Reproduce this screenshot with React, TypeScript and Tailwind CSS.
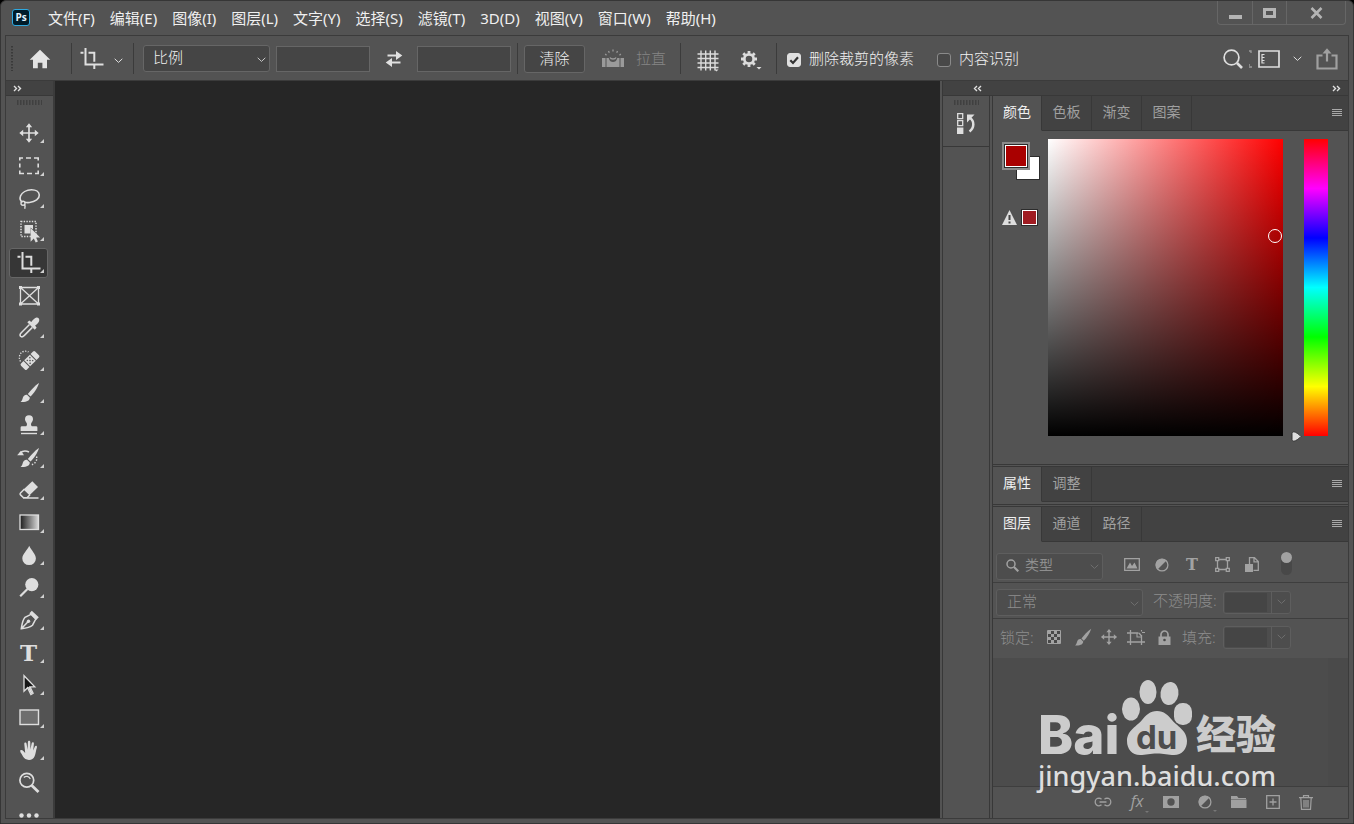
import React, { useState } from 'react';

type Kids = { children: React.ReactNode };

function Glyph({ children, w = 24, h = 24, className = '' }: Kids & { w?: number; h?: number; className?: string }) {
  return (
    <svg width={w} height={h} viewBox={`0 0 ${w} ${h}`} fill="none" stroke="none" className={`block shrink-0 ${className}`} aria-hidden="true">
      {children}
    </svg>
  );
}

function Chevron({ className = '' }: { className?: string }) {
  return (
    <Glyph w={9} h={6} className={className}>
      <path d="M0.7 0.8 4.5 4.4 8.3 0.8" stroke="currentColor" strokeWidth="1" />
    </Glyph>
  );
}

function DoubleChevron({ left = false }: { left?: boolean }) {
  return (
    <Glyph w={9} h={7} className={left ? 'rotate-180' : ''}>
      <path d="M1 1 3.500 3.500 1 6M5 1 7.500 3.500 5 6" stroke="#e0e0e0" strokeWidth="1.400" />
    </Glyph>
  );
}

function MoveShape() {
  return (
    <>
      <path d="M12 4v16M4 12h16" stroke="currentColor" strokeWidth="1.700" />
      <path d="M12 2.300 15.200 6.200H8.800zM12 21.700 15.200 17.800H8.800zM2.300 12 6.200 8.800v6.400zM21.700 12 17.800 8.800v6.400z" fill="currentColor" />
    </>
  );
}

function CropShape() {
  return (
    <path
      d="M0.500 5.700H3.500M5.500 1V17.400H23.500M8.500 5.700H14.300V14.800M14.300 18.500V22"
      stroke="currentColor"
      strokeWidth="2"
    />
  );
}

function BrushShape() {
  return (
    <>
      <path d="M22 2 C18 4.500 13.500 9.500 10.800 13 L13.500 15.600 C16.800 12.500 20.500 7 22 2z" fill="currentColor" />
      <path d="M10 13.800 L12.800 16.500 C13 19.500 9.500 21.500 3.500 21 C5.300 19.700 5.200 18.300 6 16.200 C6.800 14.300 8.400 13.400 10 13.800z" fill="currentColor" />
    </>
  );
}

function HalfCircle() {
  return (
    <>
      <circle cx="7" cy="7" r="5.900" stroke="currentColor" strokeWidth="1.300" />
      <path d="M2.500 11.500 A6.300 6.300 0 0 1 11.500 2.500z" fill="currentColor" />
    </>
  );
}

type Tool = { name: string; icon: React.ReactNode; flyout?: boolean };

const tools: Tool[] = [
  { name: '移动工具', icon: <Glyph><MoveShape /></Glyph> },
  {
    name: '矩形选框工具',
    icon: (
      <Glyph>
        <path d="M2.800 6.500V4H6M9 4h5M17 4h4.200V6.500M21.200 9.500v4M21.200 16.500v3H18M15 19.500h-5M7 19.500H2.800v-3M2.800 13.500v-4" stroke="currentColor" strokeWidth="1.600" />
      </Glyph>
    ),
  },
  {
    name: '套索工具',
    icon: (
      <Glyph>
        <path d="M5.500 16.200C3.200 14.800 2.600 12.300 3.600 9.800 5 6.500 9.500 3.900 14.500 3.800c4.500 0 7.600 2.200 7.800 5.200.2 3.700-4 6.900-9.800 7.500-1.700.2-3.300.1-5-.2" stroke="currentColor" strokeWidth="1.600" />
        <circle cx="6" cy="17.300" r="2" stroke="currentColor" strokeWidth="1.400" />
        <path d="M7.500 18.500c.8 1.300.9 2.700.2 4.300" stroke="currentColor" strokeWidth="1.500" />
      </Glyph>
    ),
  },
  {
    name: '对象选择工具',
    icon: (
      <Glyph>
        <rect x="4" y="2.500" width="15" height="15" stroke="currentColor" strokeWidth="1.500" strokeDasharray="1.400 1.300" />
        <path d="M7.500 6h8.500v4.500l-2.500-2v6H7.500z" fill="currentColor" />
        <path d="M13.600 9v13.800l3.200-3.400 1.900 4 2.200-1-1.800-3.900h4z" fill="currentColor" />
      </Glyph>
    ),
  },
  { name: '裁剪工具', icon: <Glyph><CropShape /></Glyph> },
  {
    name: '图框工具',
    flyout: false,
    icon: (
      <Glyph>
        <path d="M3.500 3.500h18v16.500h-18zM3.500 3.500l18 16.500M21.500 3.500l-18 16.500" stroke="currentColor" strokeWidth="1.300" />
        <path d="M2 2h3v3H2zM20 2h3v3h-3zM2 18.500h3v3H2zM20 18.500h3v3h-3z" fill="currentColor" />
      </Glyph>
    ),
  },
  {
    name: '吸管工具',
    icon: (
      <Glyph>
        <path d="M12.500 8.500 4.500 16.500C3.200 17.800 2.800 19.500 3.500 20.300c.8.800 2.600.4 3.900-.9l8-8" stroke="currentColor" strokeWidth="1.500" />
        <path d="m10.300 6.300 2-1.800 2 1.500c1.800-2.400 3.600-4.200 5.300-4.400 1.900-.1 3 1.400 2.600 3.100-.3 1.700-2 3.300-4.100 4.900l1.500 2.100-1.900 2z" fill="currentColor" />
      </Glyph>
    ),
  },
  {
    name: '污点修复画笔工具',
    icon: (
      <Glyph>
        <g transform="rotate(-45 13 11.500)">
          <path d="M4.500 7.300h3.500v8.400h-3.500a1.500 1.500 0 0 1-1.500-1.500V8.800a1.500 1.500 0 0 1 1.500-1.500zM18 7.300h3.500A1.500 1.500 0 0 1 23 8.800v5.400a1.500 1.500 0 0 1-1.500 1.500h-3.500z" fill="currentColor" />
          <path d="M9 7.300h8v8.400h-8z" fill="currentColor" />
          <path d="M10.500 9.500h1.300M14.200 9.500h1.300M12.300 11.500h1.400M10.500 13.500h1.300M14.200 13.500h1.300" stroke="#535353" strokeWidth="1.400" />
        </g>
        <path d="M3.500 12.500C1.200 9 2.500 3.500 6.500 2.500c2-.6 4-.2 5 .6" stroke="currentColor" strokeWidth="1.300" strokeDasharray="1.300 1.400" />
      </Glyph>
    ),
  },
  { name: '画笔工具', icon: <Glyph><BrushShape /></Glyph> },
  {
    name: '仿制图章工具',
    icon: (
      <Glyph>
        <path d="M12 2.200a4 4 0 0 1 4 4c0 1.700-1 2.400-1.700 3.900-.5 1.200-.4 2.300.5 3.100H19a1.400 1.400 0 0 1 1.400 1.400v3.300H3.600v-3.300A1.400 1.400 0 0 1 5 13.200h4.200c.9-.8 1-1.900.5-3.100C9 8.600 8 7.900 8 6.200a4 4 0 0 1 4-4z" fill="currentColor" />
        <path d="M4 20.500h16" stroke="currentColor" strokeWidth="1.400" />
      </Glyph>
    ),
  },
  {
    name: '历史记录画笔工具',
    icon: (
      <Glyph>
        <BrushShape />
        <path d="M3 6.800C6 4.500 9 4.500 12 6" stroke="currentColor" strokeWidth="1.600" />
        <path d="M.2 9.300 4 4.800l3 4.500z" fill="currentColor" />
        <path d="M19.500 10.500c1.200 4-1.500 7.500-5.500 8.500" stroke="currentColor" strokeWidth="1.400" strokeDasharray="1.400 1.600" />
      </Glyph>
    ),
  },
  {
    name: '橡皮擦工具',
    icon: (
      <Glyph>
        <path d="M15.300 3.300 21 9l-8.500 8.300-6-5.800z" fill="currentColor" />
        <path d="M7.500 11 3.500 15c-.6.600-.6 1.300 0 1.900l3 2.900h3.500l3-3M6 20.100h15.500" stroke="currentColor" strokeWidth="1.500" />
      </Glyph>
    ),
  },
  {
    name: '渐变工具',
    icon: (
      <Glyph>
        <defs>
          <linearGradient id="tool-gradient">
            <stop offset="0" stopColor="#1c1c1c" />
            <stop offset="1" stopColor="#d8d8d8" />
          </linearGradient>
        </defs>
        <rect x="3" y="4" width="18.500" height="14.500" fill="url(#tool-gradient)" stroke="currentColor" strokeWidth="1.300" />
      </Glyph>
    ),
  },
  { name: '模糊工具', icon: <Glyph><path d="M12.200 2.700c2 4.600 6.700 8.200 6.700 12.800a6.800 6.600 0 0 1-13.600 0c0-4.600 5-8.200 6.900-12.800z" fill="currentColor" /></Glyph> },
  {
    name: '减淡工具',
    icon: (
      <Glyph>
        <circle cx="14.800" cy="8.600" r="6.600" fill="currentColor" />
        <path d="M10.500 13 3.200 20.300" stroke="currentColor" strokeWidth="2.200" />
      </Glyph>
    ),
  },
  {
    name: '钢笔工具',
    icon: (
      <Glyph>
        <path d="M14 6.300 8 9.300C5.500 12 5 16.500 4.300 20.700c4.200-.5 8.500-1 11.200-3.500l3.300-6.200zM4.300 20.700l7-7.200" stroke="currentColor" strokeWidth="1.500" />
        <circle cx="11.500" cy="13.300" r="1.700" fill="currentColor" />
        <path d="m14.800 2.800 7 6.500-2.600 2.600-6.800-6.600z" fill="currentColor" />
      </Glyph>
    ),
  },
  { name: '横排文字工具', icon: <span className="font-['DejaVu_Serif',serif] text-[23px] leading-6 font-bold">T</span> },
  {
    name: '路径选择工具',
    icon: (
      <Glyph>
        <path d="M7 2.700v15.500l3.600-3.500 3.300 6.800 2.200-1.200-3.100-6.400h4.800z" fill="#151515" stroke="currentColor" strokeWidth="1.300" />
        <path d="m10.900 14.300 3.100 6.800 1.700-.9-3.100-6.500z" fill="currentColor" />
      </Glyph>
    ),
  },
  { name: '矩形工具', icon: <Glyph><rect x="3" y="4" width="18.500" height="14.500" fill="#6e6e6e" stroke="currentColor" strokeWidth="1.400" /></Glyph> },
  {
    name: '抓手工具',
    icon: (
      <Glyph>
        <path
          d="M3.300 12.300c1-.8 2.200-.2 3.300 1l1.600 1.700L7.300 5.900c-.1-1.700 2-1.900 2.300-.2l1 6 .3-7.600c.1-1.700 2.300-1.700 2.400 0l.1 7.500 1.300-6.300c.3-1.600 2.400-1.300 2.200.4l-.7 6.900 1.700-4c.7-1.400 2.500-.7 2 .8-1 3.100-1.200 6.200-2.400 9.100-1 2.300-2.700 3.400-5.500 3.400-3 0-4.500-1-6-3.300-1-1.700-1.700-3.300-2.700-4.500z"
          fill="currentColor"
        />
      </Glyph>
    ),
  },
  {
    name: '缩放工具',
    flyout: false,
    icon: (
      <Glyph>
        <circle cx="9.800" cy="9.300" r="6.900" stroke="currentColor" strokeWidth="1.700" />
        <path d="M14.800 14.500 21.500 21" stroke="currentColor" strokeWidth="2.800" />
        <path d="M6.800 6.500C8.800 4.700 12 5 13.300 8" stroke="currentColor" strokeWidth="1.200" />
      </Glyph>
    ),
  },
];

const menus = ['文件(F)', '编辑(E)', '图像(I)', '图层(L)', '文字(Y)', '选择(S)', '滤镜(T)', '3D(D)', '视图(V)', '窗口(W)', '帮助(H)'];

function Separator({ className = '' }: { className?: string }) {
  return <div className={`h-[31px] w-px shrink-0 bg-[#3b3b3b] ${className}`} />;
}

function MenuBar() {
  return (
    <header className="flex h-[34px] shrink-0 items-start">
      <div className="mt-[8px] ml-[11px] flex h-[17px] w-[18px] items-center justify-center rounded-[3px] border border-[#2fa9e0] bg-[#001c2a] font-['Open_Sans',sans-serif] text-[10px] font-bold text-[#e2f4ff]">
        Ps
      </div>
      <nav className="mt-[7px] ml-[18px] flex gap-[15px] text-[15px] leading-[21px] text-[#f0f0f0]">
        {menus.map((m) => (
          <button key={m} className="whitespace-nowrap">{m}</button>
        ))}
      </nav>
      <div className="mr-[7px] ml-auto flex h-[24px] rounded-b-[4px] border border-t-0 border-[#666666] text-[#b4b4b4]">
        <button aria-label="最小化" className="flex w-[35px] items-center justify-center border-r border-[#666666]">
          <Glyph w={13} h={14}><path d="M0 9h13v4H0z" fill="currentColor" /></Glyph>
        </button>
        <button aria-label="最大化" className="flex w-[34px] items-center justify-center border-r border-[#666666]">
          <Glyph w={13} h={12}><path d="M1.500 2.500h10v7h-10z" stroke="currentColor" strokeWidth="3" /></Glyph>
        </button>
        <button aria-label="关闭" className="flex w-[58px] items-center justify-center">
          <Glyph w={13} h={12}><path d="M1.500 1 11.500 11M11.500 1 1.500 11" stroke="currentColor" strokeWidth="2.600" /></Glyph>
        </button>
      </div>
    </header>
  );
}

function Tick({ label, initial, className }: { label: string; initial: boolean; className: string }) {
  const [on, setOn] = useState(initial);
  return (
    <label className={`flex shrink-0 items-center gap-2 whitespace-nowrap ${className}`}>
      <span className="relative mt-[3px] flex size-[14px]">
        <input
          type="checkbox"
          checked={on}
          onChange={() => setOn(!on)}
          className="size-[14px] appearance-none rounded-[3px] border border-[#8a8a8a] bg-[#484848] checked:border-[#e0e0e0] checked:bg-[#e0e0e0]"
        />
        {on && (
          <Glyph w={14} h={14} className="pointer-events-none absolute inset-0">
            <path d="M3.300 7.200 6 10 11 4.300" stroke="#333333" strokeWidth="2.200" />
          </Glyph>
        )}
      </span>
      {label}
    </label>
  );
}

function OptionsBar() {
  return (
    <div className="flex h-[45px] shrink-0 items-center border-b border-[#3b3b3b] pt-px text-[15px] font-light text-[#f2f2f2]">
      <Glyph w={2} h={25} className="ml-[5px]"><path d="M1 0v25" stroke="#3a3a3a" strokeWidth="2" strokeDasharray="1.500 1.500" /></Glyph>
      <button aria-label="主页" className="ml-[16px] text-[#e4e4e4]">
        <Glyph w={22} h={20}><path d="M11 .8 21.300 10.800H18V19.300h-4.600v-5.500H8.800v5.500H4V10.800H.7z" fill="currentColor" /></Glyph>
      </button>
      <Separator className="ml-[20px]" />
      <button aria-label="裁剪工具预设" className="ml-2 flex items-center gap-[10px] text-[#e0e0e0]">
        <Glyph><CropShape /></Glyph>
        <Chevron className="mt-1" />
      </button>
      <Separator className="ml-[10px]" />
      <div className="relative ml-[9px] shrink-0">
        <select aria-label="长宽比" className="h-[27px] w-[127px] appearance-none rounded-[3px] border border-[#666666] bg-[#454545] pb-[3px] pl-[9px] text-[15px]">
          <option>比例</option>
        </select>
        <Chevron className="pointer-events-none absolute top-3 right-1 text-[#c8c8c8]" />
      </div>
      <input aria-label="宽度" className="ml-[6px] h-[26px] w-[94px] border border-[#666666] bg-[#454545] px-1" />
      <button aria-label="交换高度和宽度" className="ml-[15px] text-[#e0e0e0]">
        <Glyph w={18} h={18}>
          <path d="M2.500 5.500H12M15.500 12.500H6" stroke="currentColor" strokeWidth="2" />
          <path d="M11 1 17.300 5.500 11 10zM7 8 .7 12.500 7 17z" fill="currentColor" />
        </Glyph>
      </button>
      <input aria-label="高度" className="ml-[14px] h-[26px] w-[94px] border border-[#666666] bg-[#454545] px-1" />
      <Separator className="ml-[6px]" />
      <button className="ml-[6px] h-[28px] w-[61px] shrink-0 rounded-[3px] border border-[#666666] bg-[#454545] pb-[2px] leading-5">清除</button>
      <button className="ml-4 flex shrink-0 items-center gap-[11px] text-[#858585]">
        <Glyph w={24} h={20}>
          <path d="M1 9h3.500v9H1zM19.500 9H23v9h-3.500zM5.500 9h2.200c.8 3 2.300 4 4.300 4s3.500-1 4.300-4h2.200v9h-13z" fill="#9a9a9a" />
          <path d="M12 .5v2M7.500 2l.8 1.700M16.500 2l-.8 1.700M4.200 5l1.300 1.200M19.800 5l-1.300 1.200M9 8.500c.8 2 5.200 2 6 0" stroke="#9a9a9a" strokeWidth="1.300" />
        </Glyph>
        <span className="whitespace-nowrap">拉直</span>
      </button>
      <Separator className="ml-[14px]" />
      <button aria-label="叠加选项" className="ml-4 pt-1 text-[#dcdcdc]">
        <Glyph w={22} h={22}>
          <path d="M4 .5v20M8.700 .5v20M13.300 .5v20M18 .5v20M.5 4h21M.5 8.500h21M.5 13h21M.5 17.500h21" stroke="currentColor" strokeWidth="1.400" />
          <path d="M17.500 19.500h4l-2 2z" fill="currentColor" />
        </Glyph>
      </button>
      <button aria-label="其他裁切选项" className="ml-[22px] text-[#dcdcdc]">
        <Glyph w={22} h={22}>
          <circle cx="8" cy="11" r="4.700" stroke="currentColor" strokeWidth="2.800" />
          <path d="M8 3v2.500M8 16.500V19M0 11h2.500M13.500 11H16M2.300 5.300l1.900 1.900M11.800 14.800l1.900 1.900M13.700 5.300l-1.900 1.900M4.200 14.800l-1.900 1.900" stroke="currentColor" strokeWidth="2.800" />
          <path d="M15.500 19h5l-2.500 2.500z" fill="currentColor" />
        </Glyph>
      </button>
      <Separator className="ml-[13px]" />
      <Tick label="删除裁剪的像素" initial className="ml-[10px]" />
      <Tick label="内容识别" initial={false} className="ml-[23px]" />
      <div className="mr-[10px] ml-auto flex items-center text-[#dedede]">
        <button aria-label="搜索">
          <Glyph w={20} h={20}>
            <circle cx="8.500" cy="8.500" r="7.400" stroke="currentColor" strokeWidth="1.700" />
            <path d="m14 14 5 5" stroke="currentColor" strokeWidth="2.600" />
          </Glyph>
        </button>
        <Glyph w={3} h={18} className="ml-[6px] text-[#9a9a9a]">
          <path d="M0 1h2v2M0 15h1M0 17h3" stroke="currentColor" strokeWidth="1.300" />
        </Glyph>
        <button aria-label="选择工作区" className="ml-[6px] flex items-center gap-[13px]">
          <Glyph w={22} h={18}>
            <path d="M1 1h20v16H1z" stroke="currentColor" strokeWidth="1.700" />
            <path d="M3.500 4.500h3M3.500 7.500h3M3.500 10.500h3M3.500 13h3M4 4v9.500" stroke="currentColor" strokeWidth="1.200" />
          </Glyph>
          <Chevron />
        </button>
        <button aria-label="共享图像" className="ml-[14px] text-[#a0a0a0]">
          <Glyph w={22} h={22}>
            <path d="M6.500 7.500H1.500V20.500h19V7.500H15.500M11 4v9.500" stroke="currentColor" strokeWidth="2.200" />
            <path d="M11 .2 15.500 5.500h-9z" fill="currentColor" />
          </Glyph>
        </button>
      </div>
    </div>
  );
}

function Grip() {
  return (
    <Glyph w={25} h={5} className="mx-auto">
      <path d="M0 2.500h25" stroke="#404040" strokeWidth="5" strokeDasharray="1.500 1.500" />
    </Glyph>
  );
}

function Toolbar() {
  const [active, setActive] = useState('裁剪工具');
  return (
    <aside className="flex w-[49px] shrink-0 flex-col overflow-hidden border-r-2 border-[#3b3b3b]">
      <div className="flex h-[15px] shrink-0 items-center border-b border-[#383838] bg-[#424242] pl-[7px]">
        <DoubleChevron />
      </div>
      <div className="shrink-0 pt-1"><Grip /></div>
      <div className="mt-[12px] flex h-[682px] shrink-0 flex-col items-center justify-around pr-[2px]">
        {tools.map((t) => (
          <button
            key={t.name}
            aria-label={t.name}
            aria-pressed={active === t.name}
            onClick={() => setActive(t.name)}
            className={`relative flex h-[30px] w-[39px] shrink-0 items-center justify-center rounded-[3px] border text-[#dedede] ${
              active === t.name ? 'border-[#666666] bg-[#363636]' : 'border-transparent'
            }`}
          >
            {t.icon}
            {t.flyout !== false && (
              <Glyph w={4} h={4} className="absolute right-[3px] bottom-1"><path d="M4 0v4H0z" fill="#d0d0d0" /></Glyph>
            )}
          </button>
        ))}
      </div>
      <button aria-label="编辑工具栏" className="flex shrink-0 justify-center pt-[14px] pr-[2px]">
        <Glyph w={20} h={5}>
          <circle cx="2.500" cy="2.500" r="2.200" fill="#dedede" />
          <circle cx="10" cy="2.500" r="2.200" fill="#dedede" />
          <circle cx="17.500" cy="2.500" r="2.200" fill="#dedede" />
        </Glyph>
      </button>
    </aside>
  );
}

function TabBar({ tabs }: { tabs: string[] }) {
  const [active, setActive] = useState(tabs[0]);
  return (
    <div className="flex h-[35px] shrink-0 bg-[#424242] text-[14px]">
      <div role="tablist" className="flex">
        {tabs.map((t) => (
          <button
            key={t}
            role="tab"
            aria-selected={active === t}
            onClick={() => setActive(t)}
            className={`w-[50px] border-r border-b border-r-[#383838] pb-[3px] first:w-[49px] ${
              active === t ? 'border-b-[#535353] bg-[#535353] text-[#f0f0f0]' : 'border-b-[#383838] text-[#a0a0a0]'
            }`}
          >
            {t}
          </button>
        ))}
      </div>
      <div className="flex flex-1 items-center justify-end border-b border-[#383838] pr-[6px]">
        <button aria-label="面板菜单">
          <Glyph w={10} h={8}><path d="M0 .5h10M0 2.500h10M0 4.500h10M0 6.500h10" stroke="#a8a8a8" /></Glyph>
        </button>
      </div>
    </div>
  );
}

function ColorPanel() {
  const [hue, setHue] = useState(0);
  return (
    <section className="flex h-[369px] shrink-0 flex-col border-b border-[#383838]">
      <TabBar tabs={['颜色', '色板', '渐变', '图案']} />
      <div className="flex items-start pt-2 pr-[20px] pl-[9px]">
        <div className="w-[46px] shrink-0 pt-[3px]">
          <div className="relative h-[40px]">
            <button aria-label="设置背景色" className="absolute top-[14px] left-[14px] size-[24px] border border-[#2c2c2c] bg-white" />
            <button aria-label="设置前景色" className="absolute top-0 left-0 border-2 border-[#8c8c8c]">
              <span className="block size-[24px] border border-[#2c2c2c]">
                <span className="block size-[22px] border border-white bg-[#a90000]" />
              </span>
            </button>
          </div>
          <div className="mt-[27px] flex items-center gap-1">
            <Glyph w={15} h={15}>
              <path d="M7.500 0 15 15H0z" fill="#dedede" />
              <path d="M7.500 5v5M7.500 11.500v2" stroke="#444444" strokeWidth="2" />
            </Glyph>
            <button aria-label="校正为可打印颜色" className="size-[17px] border border-[#2c2c2c]">
              <span className="block size-[15px] border border-white bg-[#a01c22]" />
            </button>
          </div>
        </div>
        <div className="relative h-[297px] flex-1 bg-[linear-gradient(to_bottom,transparent,#000),linear-gradient(to_right,#fff,#f00)]">
          <div className="absolute top-[90px] right-[1px] size-[14px] rounded-full border border-white" />
        </div>
        <div className="relative ml-[21px] h-[297px] w-[24px] shrink-0 bg-[linear-gradient(to_bottom,#f00,#f0f,#00f,#0ff,#0f0,#ff0,#f00)]">
          <input
            type="range"
            aria-label="色相"
            min={0}
            max={360}
            value={hue}
            onChange={(e) => setHue(Number(e.target.value))}
            className="absolute inset-0 h-full w-full opacity-0 [direction:rtl] [writing-mode:vertical-lr]"
          />
          <Glyph w={11} h={11} className="absolute -bottom-[6px] -left-[13px]">
            <path d="M1 2.500C1 1.500 2 .8 3 .8c1.500 0 6 3.200 7 4.700-1 1.500-5.500 4.700-7 4.700-1 0-2-.7-2-1.700z" fill="#dedede" stroke="#333333" />
          </Glyph>
        </div>
      </div>
    </section>
  );
}

function DimSelect({ label, value, wide = false }: { label: string; value: string; wide?: boolean }) {
  return (
    <div className="relative shrink-0">
      <select
        aria-label={label}
        className={`h-[27px] appearance-none rounded-[3px] border border-[#5e5e5e] bg-[#4d4d4d] pb-[3px] text-[#8e8e8e] ${
          wide ? 'w-[147px] pl-[10px] text-[15px]' : 'w-[107px] pl-7 text-[14px]'
        }`}
      >
        <option>{value}</option>
      </select>
      <Chevron className="pointer-events-none absolute top-3 right-1 text-[#6e6e6e]" />
    </div>
  );
}

function Combo({ id }: { id: string }) {
  return (
    <div className="flex h-[23px] w-[68px] shrink-0 rounded-[3px] border border-[#5e5e5e] bg-[#4d4d4d]">
      <input id={id} disabled className="m-px mr-1 w-[42px] bg-[#454545]" />
      <button aria-label="展开滑块" className="flex flex-1 items-center justify-center border-l border-[#5e5e5e] text-[#6e6e6e]">
        <Chevron />
      </button>
    </div>
  );
}

function IconButton({ label, children, className }: Kids & { label: string; className: string }) {
  return (
    <button aria-label={label} className={`flex shrink-0 items-center justify-center ${className}`}>{children}</button>
  );
}

function Watermark() {
  return (
    <div className="pointer-events-none absolute top-[22px] right-[67px] w-[243px] text-[#cccccc]">
      <div className="flex h-[76px] items-end">
        <span className="w-[84px] shrink-0 font-['Inter',sans-serif] text-[53px] leading-[41px] font-extrabold">Bai</span>
        <div className="relative h-[76px] w-[70px] shrink-0">
          <Glyph w={70} h={76}>
            <ellipse cx="9" cy="29" rx="9" ry="11.500" fill="currentColor" />
            <ellipse cx="26" cy="12" rx="8.500" ry="12" fill="currentColor" />
            <ellipse cx="47.500" cy="13.500" rx="9" ry="11.500" fill="currentColor" transform="rotate(8 47.500 13.500)" />
            <rect x="52" y="23" width="18" height="22" rx="8.500" fill="currentColor" />
            <path d="M35 31c7 0 11 4 15 9 4 5.500 15 10 15 21 0 8-5 14-13 14-6 0-10-1.500-17-1.500S24 75 18 75C10 75 5 69 5 61c0-11 11-15.500 15-21 4-5 8-9 15-9z" fill="currentColor" />
          </Glyph>
          <span className="absolute bottom-0 left-[14px] font-['Inter',sans-serif] text-[33px] leading-[38px] font-bold text-[#4d4d4d]">du</span>
        </div>
        <span className="ml-1 text-[40px] leading-[44px] font-black whitespace-nowrap">经验</span>
      </div>
      <div className="font-['Noto_Sans',sans-serif] text-[27px] leading-[40px] font-medium text-[#dedede]">jingyan.baidu.com</div>
    </div>
  );
}

function LayersPanel() {
  return (
    <section className="relative flex min-h-0 flex-1 flex-col">
      <TabBar tabs={['图层', '通道', '路径']} />
      <div className="flex h-[41px] shrink-0 items-center border-b border-[#3e3e3e] pt-2 pl-[3px] text-[#a2a2a2]">
        <div className="relative">
          <DimSelect label="图层过滤类型" value="类型" />
          <Glyph w={13} h={13} className="pointer-events-none absolute top-[7px] left-[10px]">
            <circle cx="5" cy="5" r="4" stroke="currentColor" strokeWidth="1.500" />
            <path d="m8 8 4.300 4.300" stroke="currentColor" strokeWidth="2.200" />
          </Glyph>
        </div>
        <div className="ml-[14px] flex pb-[3px]">
          <IconButton label="像素图层滤镜" className="w-[30px]">
            <Glyph w={16} h={13}>
              <path d="M.7.700h14.600v11.600H.7z" stroke="currentColor" strokeWidth="1.300" />
              <path d="m2.500 10.500 3.500-6 2 3.500 2.500-3.500 3 6z" fill="currentColor" />
            </Glyph>
          </IconButton>
          <IconButton label="调整图层滤镜" className="w-[30px]"><Glyph w={14} h={14}><HalfCircle /></Glyph></IconButton>
          <IconButton label="文字图层滤镜" className="w-[30px] font-['DejaVu_Serif',serif] text-[16px] leading-4 font-bold">T</IconButton>
          <IconButton label="形状图层滤镜" className="w-[30px]">
            <Glyph w={15} h={15}>
              <path d="M2.500 2.500h10v10h-10z" stroke="currentColor" strokeWidth="1.300" />
              <path d="M.7.700h3v3h-3zM11.300.700h3v3h-3zM.7 11.300h3v3h-3zM11.300 11.300h3v3h-3z" fill="#535353" stroke="currentColor" strokeWidth="1.300" />
            </Glyph>
          </IconButton>
          <IconButton label="智能对象滤镜" className="w-[30px]">
            <Glyph w={14} h={15}>
              <path d="M4.500 7V.7h5l3.800 3.800v8.800H8.500M9 .7v4.200h4" stroke="currentColor" strokeWidth="1.300" />
              <path d="M0 7h8v8H0z" fill="currentColor" />
            </Glyph>
          </IconButton>
        </div>
        <button aria-label="打开或关闭图层滤镜" className="mb-[6px] ml-[14px] h-[23px] w-[11px] rounded-full bg-[#484848]">
          <span className="mb-3 block size-[11px] rounded-full bg-[#a2a2a2]" />
        </button>
      </div>
      <div className="flex h-[36px] shrink-0 items-center border-b border-[#3e3e3e] pt-[3px] pl-[3px] text-[15px] font-light text-[#8e8e8e]">
        <DimSelect label="混合模式" value="正常" wide />
        <label htmlFor="opacity" className="mb-1 ml-[10px] w-[70px] shrink-0 whitespace-nowrap">不透明度:</label>
        <Combo id="opacity" />
      </div>
      <div className="flex h-[39px] shrink-0 items-center pb-[3px] pl-[7px] text-[15px] font-light text-[#8e8e8e]">
        <span className="w-[40px] shrink-0 whitespace-nowrap">锁定:</span>
        <div className="flex text-[#a2a2a2]">
          <IconButton label="锁定透明像素" className="w-[28px]">
            <Glyph w={14} h={14}>
              <path d="M.5.500h13v13H.5z" fill="#484848" stroke="currentColor" />
              <path d="M1 1h3v3H1zM7 1h3v3H7zM4 4h3v3H4zM10 4h3v3h-3zM1 7h3v3H1zM7 7h3v3H7zM4 10h3v3H4zM10 10h3v3h-3z" fill="currentColor" />
            </Glyph>
          </IconButton>
          <IconButton label="锁定图像像素" className="w-[28px]">
            <svg width="21" height="21" viewBox="0 0 24 24" fill="none" aria-hidden="true"><BrushShape /></svg>
          </IconButton>
          <IconButton label="锁定位置" className="w-[26px]">
            <svg width="20" height="20" viewBox="0 0 24 24" fill="none" aria-hidden="true"><MoveShape /></svg>
          </IconButton>
          <IconButton label="防止在画板内外自动嵌套" className="w-[28px]">
            <Glyph w={18} h={15}>
              <path d="M3.500 0v15M0 3h11.500M0 12h18M14.500 5v10M12 3l2.500 3" stroke="currentColor" strokeWidth="1.300" />
              <path d="M10 3v4h4.500M15 2.500h3M14.500 0v1.500" stroke="currentColor" strokeWidth="1.100" />
            </Glyph>
          </IconButton>
          <IconButton label="锁定全部" className="w-[28px]">
            <Glyph w={13} h={15}>
              <path d="M3 7V4.500a3.500 3.500 0 0 1 7 0V7" stroke="currentColor" strokeWidth="1.700" />
              <path d="M.5 6.500h12V15H.5z" fill="currentColor" />
              <circle cx="6.500" cy="10" r="1.300" fill="#484848" />
            </Glyph>
          </IconButton>
        </div>
        <label htmlFor="fill" className="ml-1 w-[41px] shrink-0 whitespace-nowrap">填充:</label>
        <Combo id="fill" />
      </div>
      <div className="relative flex min-h-0 flex-1 justify-end border-b border-[#3e3e3e] bg-[#4c4c4c]">
        <div className="w-5 bg-[#4a4a4a]" />
        <Watermark />
      </div>
      <div className="flex h-[31px] shrink-0 items-center justify-end pr-[25px] pb-px text-[#a0a0a0]">
        <IconButton label="链接图层" className="w-[34px]">
          <Glyph w={18} h={10}>
            <path d="M7.500 2.200A4 4 0 0 0 5 1.200a3.800 3.800 0 0 0 0 7.600 4 4 0 0 0 2.500-1M10.500 2.200a4 4 0 0 1 2.500-1 3.800 3.800 0 0 1 0 7.600 4 4 0 0 1-2.500-1M5.500 5h7" stroke="currentColor" strokeWidth="1.300" />
          </Glyph>
        </IconButton>
        <IconButton label="添加图层样式" className="relative w-[34px] pb-[2px] font-['Open_Sans',sans-serif] text-[16px] leading-5 italic">
          fx
          <Glyph w={4} h={2} className="absolute right-[5px] bottom-0"><path d="M0 0h4L2 2z" fill="#777777" /></Glyph>
        </IconButton>
        <IconButton label="添加图层蒙版" className="w-[34px]">
          <Glyph w={16} h={12}>
            <path d="M0 0h16v12H0z" fill="currentColor" />
            <circle cx="8" cy="6" r="3.700" fill="#535353" />
          </Glyph>
        </IconButton>
        <IconButton label="创建新的填充或调整图层" className="relative w-[34px]">
          <Glyph w={14} h={14}><HalfCircle /></Glyph>
          <Glyph w={4} h={2} className="absolute right-[5px] -bottom-[3px]"><path d="M0 0h4L2 2z" fill="#777777" /></Glyph>
        </IconButton>
        <IconButton label="创建新组" className="w-[34px]">
          <Glyph w={16} h={12}><path d="M0 0h6l1.500 2H15v1H0zM0 3.500h15.500V12H0z" fill="currentColor" /></Glyph>
        </IconButton>
        <IconButton label="创建新图层" className="w-[33px]">
          <Glyph w={14} h={14}><path d="M.7.700h12.600v12.600H.7zM7 3.500v7M3.500 7h7" stroke="currentColor" strokeWidth="1.300" /></Glyph>
        </IconButton>
        <IconButton label="删除图层" className="w-[34px]">
          <Glyph w={14} h={15}>
            <path d="M0 2.700h14M4.500 2.500V.7h5v1.800M1.800 3l.7 11.300h9L12.200 3M5 5v7.500M7 5v7.500M9 5v7.500" stroke="currentColor" strokeWidth="1.200" />
          </Glyph>
        </IconButton>
      </div>
    </section>
  );
}

function Dock() {
  return (
    <div className="flex w-[406px] shrink-0 flex-col border-l border-[#383838]">
      <div className="flex h-[15px] shrink-0 items-center justify-between border-b border-[#383838] bg-[#424242] pr-[7px] pl-[30px]">
        <DoubleChevron left />
        <DoubleChevron />
      </div>
      <div className="flex min-h-0 flex-1">
        <div className="flex w-[47px] shrink-0 flex-col border-r border-[#383838]">
          <div className="flex h-[51px] shrink-0 flex-col border-b border-[#383838] pt-1">
            <Grip />
            <button aria-label="历史记录" className="mx-auto mt-[7px]">
              <Glyph w={20} h={22}>
                <path d="M1.700 1.700h5v5h-5zM1.700 8.700h5v5h-5z" stroke="#dedede" strokeWidth="1.300" />
                <path d="M1 15.500h6.400v6.400H1z" fill="#dedede" />
                <path d="M14 6c4.500 3 4.500 10-.5 13.500" stroke="#dedede" strokeWidth="2.500" />
                <path d="M11 2.500h7.500l-7.500 8z" fill="#dedede" />
              </Glyph>
            </button>
          </div>
        </div>
        <div className="ml-[2px] flex min-w-0 flex-1 flex-col border-l border-[#383838]">
          <ColorPanel />
          <section className="mt-px mb-px flex h-[39px] shrink-0 flex-col border-t border-b border-[#383838]">
            <TabBar tabs={['属性', '调整']} />
          </section>
          <div className="flex min-h-0 flex-1 flex-col border-t border-[#383838]"><LayersPanel /></div>
        </div>
      </div>
    </div>
  );
}

export default function App() {
  return (
    <div className="bg-black font-['Noto_Sans','Noto_Sans_CJK_SC',sans-serif]">
      <div className="flex h-screen min-h-[640px] flex-col overflow-hidden rounded-t-[6px] border border-[#363636] bg-[#535353]">
        <MenuBar />
        <div className="mr-[4px] mb-[4px] ml-[4px] flex min-h-0 flex-1 flex-col border border-[#3b3b3b]">
          <OptionsBar />
          <div className="flex min-h-0 flex-1">
            <Toolbar />
            <main aria-label="文档窗口" className="mr-[2px] min-w-0 flex-1 bg-[#262626]" />
            <Dock />
          </div>
        </div>
      </div>
    </div>
  );
}
